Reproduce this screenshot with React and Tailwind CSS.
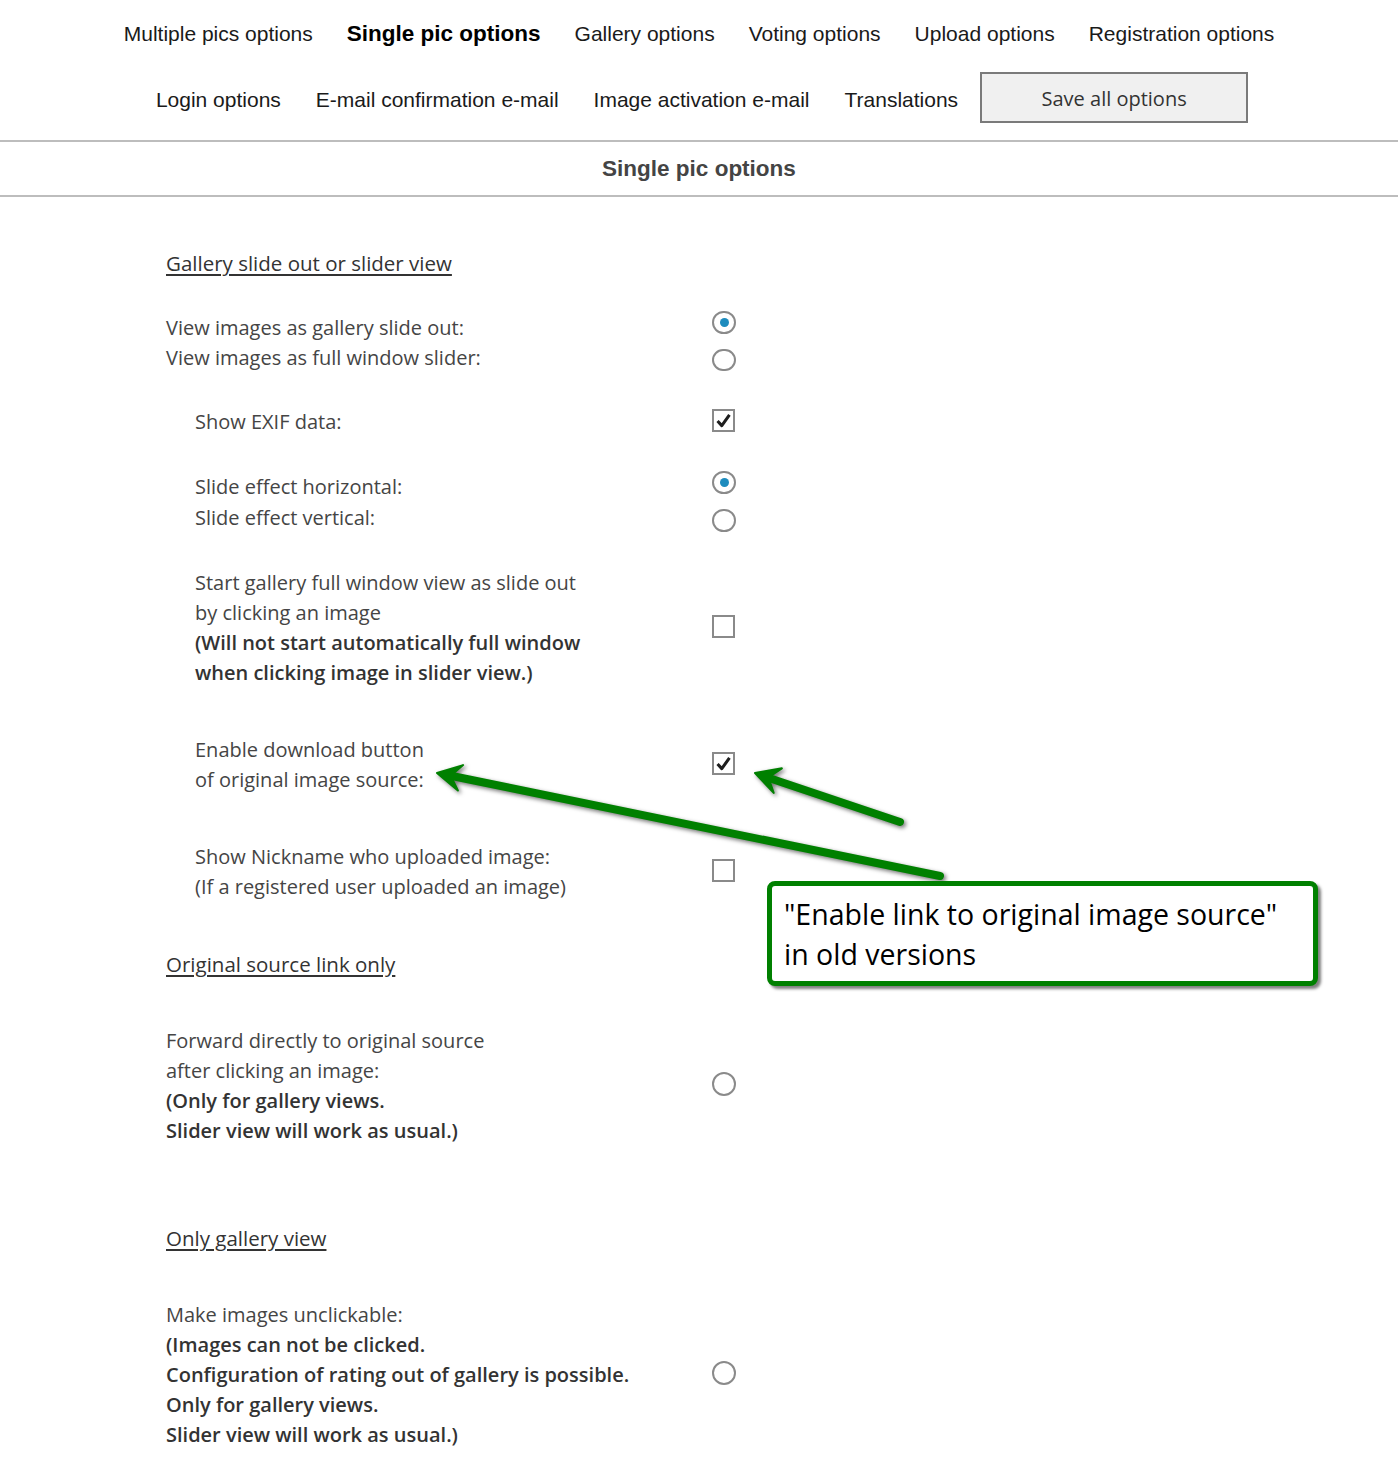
import React from 'react';

const navTop = [
  { name: 'Multiple pics options' },
  { name: 'Single pic options', active: true },
  { name: 'Gallery options' },
  { name: 'Voting options' },
  { name: 'Upload options' },
  { name: 'Registration options' },
];

const navBottom = ['Login options', 'E-mail confirmation e-mail', 'Image activation e-mail', 'Translations'];

const Radio = ({ checked }) => (
  <span className="flex h-[24px] w-[24px] items-center justify-center rounded-full border-2 border-[#8a8a8a] bg-white">
    {checked && <span className="h-[9px] w-[9px] rounded-full bg-[#1e8cbe]" />}
  </span>
);

const Checkbox = ({ checked }) => (
  <span className="flex h-[23px] w-[23px] items-center justify-center border-2 border-[#8a8a8a] bg-white">
    {checked && (
      <svg width="17" height="17" viewBox="0 0 20 20">
        <path d="M3 10.5 L8 16 L17 3.5" fill="none" stroke="#1e1e1e" strokeWidth="3.6" strokeLinejoin="round" />
      </svg>
    )}
  </span>
);

const Heading = ({ children, className = '' }) => (
  <div className={`leading-[30px] text-[20.5px] font-medium text-[#333] underline underline-offset-[3px] decoration-[1.5px] ${className}`}>
    {children}
  </div>
);

// one option row: text on the left, control column on the right
const Row = ({ indent, children, control, className = '' }) => (
  <div className={`flex items-center ${className}`}>
    <div className={`w-[546px] leading-[30px] text-[20px] text-[#454545] ${indent ? 'pl-[29px]' : ''}`}>{children}</div>
    <div className="flex flex-col items-start self-stretch justify-center">{control}</div>
  </div>
);

const RadioPair = ({ offset }) => (
  <div className={`flex h-full flex-col justify-start gap-[15px] ${offset}`}>
    <Radio checked />
    <Radio />
  </div>
);

const Bold = ({ children }) => <div className="font-semibold text-[#333]">{children}</div>;

export default function App() {
  return (
    <div className="relative min-h-[1484px] bg-white" style={{ fontFamily: '"Open Sans", "Noto Sans", sans-serif' }}>
      {/* tabs */}
      <nav style={{ fontFamily: '"Liberation Sans", Arial, sans-serif' }} className="text-[#1a1a1a]">
        <div className="flex items-center justify-center gap-[34px] pt-[20px] leading-[28px]">
          {navTop.map((item) => (
            <span key={item.name} className={item.active ? 'text-[22.5px] font-bold text-black' : 'text-[21px]'}>
              {item.name}
            </span>
          ))}
        </div>
        <div className="mt-[24px] flex items-center justify-center gap-[35px] pl-[6px] text-[21px]">
          {navBottom.map((name) => (
            <span key={name} className="pt-[5px]">
              {name}
            </span>
          ))}
          <button
            className="-ml-[13px] h-[51px] w-[268px] border-2 border-[#7a7a7a] bg-[#f0f0f0] pt-[3px] text-[20px] text-[#333]"
            style={{ fontFamily: '"Open Sans", "Noto Sans", sans-serif' }}
          >
            Save all options
          </button>
        </div>
      </nav>

      <div className="mt-[17px] h-[2px] bg-[#bdbdbd]" />
      <div
        className="flex h-[53px] items-center justify-center text-[22.5px] font-bold text-[#444]"
        style={{ fontFamily: '"Liberation Sans", Arial, sans-serif' }}
      >
        Single pic options
      </div>
      <div className="h-[2px] bg-[#bdbdbd]" />

      {/* options */}
      <div className="pl-[166px]">
        <Heading className="mt-[51px]">Gallery slide out or slider view</Heading>

        <Row className="mt-[35px]" control={<RadioPair offset="-mt-[4px]" />}>
          <div>View images as gallery slide out:</div>
          <div>View images as full window slider:</div>
        </Row>

        <Row indent className="mt-[34px]" control={<div className="-mt-[3px]"><Checkbox checked /></div>}>
          Show EXIF data:
        </Row>

        <Row indent className="mt-[35px]" control={<RadioPair offset="-mt-[3px]" />}>
          <div>Slide effect horizontal:</div>
          <div className="mt-[1px]">Slide effect vertical:</div>
        </Row>

        <Row indent className="mt-[35px]" control={<div className="-mt-[4px]"><Checkbox /></div>}>
          <div>Start gallery full window view as slide out</div>
          <div>by clicking an image</div>
          <Bold>(Will not start automatically full window</Bold>
          <Bold>when clicking image in slider view.)</Bold>
        </Row>

        <Row indent className="mt-[47px]" control={<div className="-mt-[4px]"><Checkbox checked /></div>}>
          <div>Enable download button</div>
          <div>of original image source:</div>
        </Row>

        <Row indent className="mt-[47px]" control={<div className="-mt-[4px]"><Checkbox /></div>}>
          <div>Show Nickname who uploaded image:</div>
          <div>(If a registered user uploaded an image)</div>
        </Row>

        <Heading className="mt-[47px]">Original source link only</Heading>

        <Row className="mt-[47px]" control={<div className="-mt-[5px]"><Radio /></div>}>
          <div>Forward directly to original source</div>
          <div>after clicking an image:</div>
          <Bold>(Only for gallery views.</Bold>
          <Bold>Slider view will work as usual.)</Bold>
        </Row>

        <Heading className="mt-[77px]">Only gallery view</Heading>

        <Row className="mt-[47px]" control={<div className="-mt-[5px]"><Radio /></div>}>
          <div>Make images unclickable:</div>
          <Bold>(Images can not be clicked.</Bold>
          <Bold>Configuration of rating out of gallery is possible.</Bold>
          <Bold>Only for gallery views.</Bold>
          <Bold>Slider view will work as usual.)</Bold>
        </Row>
      </div>

      {/* annotation arrows */}
      <svg
        className="pointer-events-none absolute left-0 top-0"
        width="1398"
        height="1484"
        style={{ filter: 'drop-shadow(2px 2px 2px rgba(0,0,0,0.55))' }}
      >
        <g fill="#008000" stroke="#008000">
          <line x1="452" y1="776" x2="940" y2="876" strokeWidth="8" strokeLinecap="round" />
          <polygon points="437,773 457.9,790.5 450.7,775.8 463.1,765.1" strokeWidth="2" strokeLinejoin="round" />
          <line x1="769" y1="778" x2="900" y2="822" strokeWidth="8" strokeLinecap="round" />
          <polygon points="755,773 773.7,792.9 768.3,777.4 781.9,768.3" strokeWidth="2" strokeLinejoin="round" />
        </g>
      </svg>

      {/* callout */}
      <div className="absolute left-[767px] top-[881px] h-[105px] w-[551px] rounded-[8px] border-[5px] border-[#008000] bg-white px-[12px] pt-[8px] text-[28.5px] leading-[40px] text-black shadow-[3px_3px_3px_rgba(0,0,0,0.5)]">
        <div>"Enable link to original image source"</div>
        <div>in old versions</div>
      </div>
    </div>
  );
}
